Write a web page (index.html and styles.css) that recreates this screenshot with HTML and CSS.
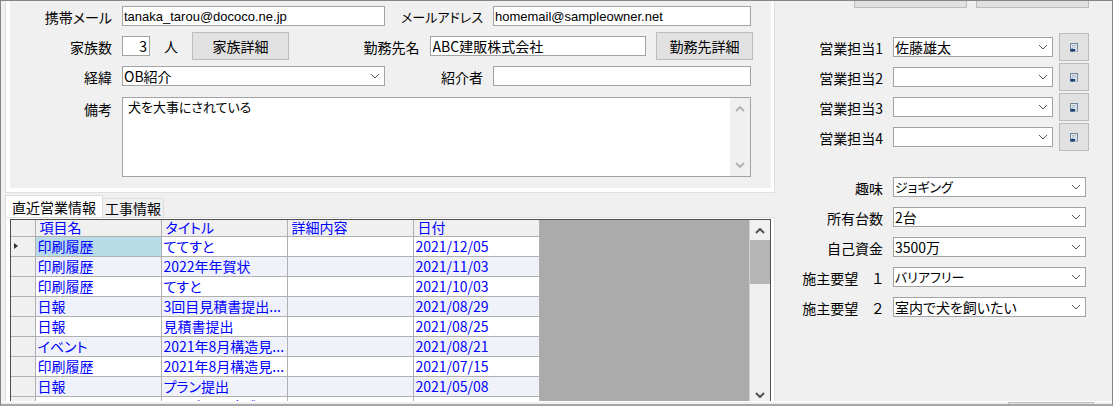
FILE: index.html
```html
<!DOCTYPE html>
<html lang="ja">
<head>
<meta charset="utf-8">
<title>顧客情報</title>
<link rel="stylesheet" href="styles.css">
</head>
<body>
<svg class="defs" aria-hidden="true">
  <symbol id="down" viewBox="0 0 10 6"><path d="M1 1 L5 5 L9 1" fill="none" stroke="currentColor"/></symbol>
  <symbol id="up" viewBox="0 0 10 6"><path d="M1 5 L5 1 L9 5" fill="none" stroke="currentColor"/></symbol>
  <symbol id="assign" viewBox="0 0 10 11">
    <rect x="1.5" y="1.5" width="7" height="8" fill="#dfe6ee" stroke="#6f859c"/>
    <path d="M3 3.5h4M3 5h4" stroke="#b4bec9"/>
    <path d="M6 7h2.5v3H6z" fill="#c3cad2"/>
    <path d="M1 8 L3.5 6 V7 H6 V9 H3.5 V10z" fill="#173f73"/>
  </symbol>
</svg>
<div class="window">
  <main class="workspace">
    <div class="left">
      <form class="panel">
        <div class="row halves">
          <div class="field"><label class="label" for="mobile">携帯メール</label><input class="box latin" id="mobile" type="text" value="tanaka_tarou@dococo.ne.jp"></div>
          <div class="field"><label class="label second kana" for="mail">メールアドレス</label><input class="box latin" id="mail" type="text" value="homemail@sampleowner.net"></div>
        </div>
        <div class="row family">
          <div class="field"><label class="label" for="family">家族数</label><input class="box count" id="family" type="text" value="3"><span class="unit">人</span><button class="button" type="button">家族詳細</button></div>
          <div class="field work"><label for="work">勤務先名</label><input class="box" id="work" type="text" value="ABC建販株式会社"><button class="button" type="button">勤務先詳細</button></div>
        </div>
        <div class="row halves">
          <div class="field"><label class="label" for="route">経緯</label><span class="combo"><select class="box" id="route"><option>OB紹介</option></select><svg class="arrow"><use href="#down"/></svg></span></div>
          <div class="field"><label class="label second" for="referrer">紹介者</label><input class="box" id="referrer" type="text"></div>
        </div>
        <div class="field notes"><label class="label" for="notes">備考</label><span class="memo"><textarea class="box kana" id="notes">犬を大事にされている</textarea><span class="memo-bar"><svg><use href="#up"/></svg><svg><use href="#down"/></svg></span></span></div>
      </form>
      <section class="tabs">
        <div class="tablist" role="tablist"><button class="tab active" type="button" role="tab" aria-selected="true">直近営業情報</button><button class="tab" type="button" role="tab" aria-selected="false">工事情報</button></div>
        <div class="tabpanel" role="tabpanel">
          <div class="list">
            <div class="list-body">
              <table class="table">
                <thead><tr><th class="mark"></th><th>項目名</th><th>タイトル</th><th>詳細内容</th><th>日付</th></tr></thead>
                <tbody>
                  <tr><td class="mark"><svg class="current" viewBox="0 0 4 6"><path d="M0 0 L4 3 L0 6z"/></svg></td><td class="selected">印刷履歴</td><td>ててすと</td><td></td><td>2021/12/05</td></tr>
                  <tr><td class="mark"></td><td>印刷履歴</td><td>2022年年賀状</td><td></td><td>2021/11/03</td></tr>
                  <tr><td class="mark"></td><td>印刷履歴</td><td>てすと</td><td></td><td>2021/10/03</td></tr>
                  <tr><td class="mark"></td><td>日報</td><td>3回目見積書提出...</td><td></td><td>2021/08/29</td></tr>
                  <tr><td class="mark"></td><td>日報</td><td>見積書提出</td><td></td><td>2021/08/25</td></tr>
                  <tr><td class="mark"></td><td>イベント</td><td>2021年8月構造見...</td><td></td><td>2021/08/21</td></tr>
                  <tr><td class="mark"></td><td>印刷履歴</td><td>2021年8月構造見...</td><td></td><td>2021/07/15</td></tr>
                  <tr><td class="mark"></td><td>日報</td><td>プラン提出</td><td></td><td>2021/05/08</td></tr>
                  <tr><td class="mark"></td><td>イベント</td><td>2021年4月完成見...</td><td></td><td>2021/04/25</td></tr>
                </tbody>
              </table>
            </div>
            <div class="scrollbar"><svg><use href="#up"/></svg><span class="thumb"></span><svg><use href="#down"/></svg></div>
          </div>
        </div>
      </section>
    </div>
    <form class="right">
      <div class="top-buttons"><span class="stub"></span><span class="stub"></span></div>
      <div class="group staff">
        <div class="field"><label class="label" for="s1">営業担当1</label><span class="combo"><select class="box" id="s1"><option>佐藤雄太</option></select><svg class="arrow"><use href="#down"/></svg></span><button class="button icon" type="button" aria-label="担当1を選択"><svg><use href="#assign"/></svg></button></div>
        <div class="field"><label class="label" for="s2">営業担当2</label><span class="combo"><select class="box" id="s2"><option></option></select><svg class="arrow"><use href="#down"/></svg></span><button class="button icon" type="button" aria-label="担当2を選択"><svg><use href="#assign"/></svg></button></div>
        <div class="field"><label class="label" for="s3">営業担当3</label><span class="combo"><select class="box" id="s3"><option></option></select><svg class="arrow"><use href="#down"/></svg></span><button class="button icon" type="button" aria-label="担当3を選択"><svg><use href="#assign"/></svg></button></div>
        <div class="field"><label class="label" for="s4">営業担当4</label><span class="combo"><select class="box" id="s4"><option></option></select><svg class="arrow"><use href="#down"/></svg></span><button class="button icon" type="button" aria-label="担当4を選択"><svg><use href="#assign"/></svg></button></div>
      </div>
      <div class="group">
        <div class="field"><label class="label" for="hobby">趣味</label><span class="combo"><select class="box kana" id="hobby"><option>ジョギング</option></select><svg class="arrow"><use href="#down"/></svg></span></div>
        <div class="field"><label class="label" for="cars">所有台数</label><span class="combo"><select class="box" id="cars"><option>2台</option></select><svg class="arrow"><use href="#down"/></svg></span></div>
        <div class="field"><label class="label" for="funds">自己資金</label><span class="combo"><select class="box" id="funds"><option>3500万</option></select><svg class="arrow"><use href="#down"/></svg></span></div>
        <div class="field"><label class="label" for="w1">施主要望　１</label><span class="combo"><select class="box kana" id="w1"><option>バリアフリー</option></select><svg class="arrow"><use href="#down"/></svg></span></div>
        <div class="field"><label class="label" for="w2">施主要望　２</label><span class="combo"><select class="box" id="w2"><option>室内で犬を飼いたい</option></select><svg class="arrow"><use href="#down"/></svg></span></div>
      </div>
    </form>
  </main>
  <footer class="footer"><span class="stub"></span></footer>
</div>
</body>
</html>
```
FILE: styles.css
```css
* { box-sizing: border-box; }
body { margin: 0; }
body, input, select, textarea, button {
  font-family: "Noto Sans CJK JP", sans-serif;
  font-size: 14px;
  font-feature-settings: "palt";
  color: #000;
}
.kana { font-size: 13px; }
.latin { font-family: "Liberation Sans", sans-serif; font-size: 13px; }
.defs { position: absolute; width: 0; height: 0; }
.window {
  display: flex;
  flex-direction: column;
  height: 100vh;
  overflow: hidden;
  border: 1px solid #858585;
  border-bottom-width: 2px;
  border-bottom-color: #a6a6a6;
  background: #f0f0f0;
}
.workspace { flex: 1; display: flex; min-height: 0; overflow: hidden; }
.left {
  flex: 1;
  display: flex;
  flex-direction: column;
  min-width: 0;
  min-height: 0;
  padding-left: 4px;
}
.panel {
  padding: 0 23px 15px 0;
  border: 1px solid #e0e0e0;
  border-top: 0;
  box-shadow: inset 4px 0 #fff, inset -3px 0 #fff, inset 0 -4px #fff;
}
.row { display: grid; height: 30px; align-items: center; }
.halves { grid-template-columns: 380fr 367fr; }
.family { grid-template-columns: 358fr 390fr; margin-right: -2px; }
.field { display: flex; align-items: center; gap: 10px; min-width: 0; }
.label { flex: none; width: 106px; text-align: right; white-space: nowrap; line-height: 20px; padding-top: 2px; }
.label.second { width: 98px; }
.work label { white-space: nowrap; padding-top: 2px; }
.box {
  flex: 1;
  min-width: 0;
  width: 100%;
  height: 20px;
  margin: 0;
  padding: 0 2px;
  border: 1px solid #a3a3a3;
  border-radius: 0;
  background: #fff;
  line-height: 18px;
  appearance: none;
  outline: none;
}
select.box { padding: 0 1px 1px; }
.box.latin { padding: 0 1px; }
.box.count { flex: none; width: 28px; text-align: right; }
.unit { width: 22px; padding-left: 4px; }
.button {
  flex: none;
  height: 28px;
  width: 97px;
  padding: 0;
  border: 1px solid #bcbcbc;
  background: #e1e1e1;
}
.combo { position: relative; flex: 1; display: flex; min-width: 0; }
.arrow {
  position: absolute;
  right: 5px;
  top: 7px;
  width: 10px;
  height: 6px;
  color: #555;
  pointer-events: none;
}
.notes { align-items: flex-start; padding-top: 6px; }
.memo { position: relative; flex: 1; display: flex; }
.memo .box { height: 80px; padding: 0 24px 0 5px; resize: none; overflow: hidden; }
.memo-bar {
  position: absolute;
  top: 1px;
  right: 1px;
  bottom: 1px;
  width: 20px;
  display: flex;
  flex-direction: column;
  justify-content: space-between;
  align-items: center;
  padding: 8px 0;
  background: #f0f0f0;
  color: #b4b4b4;
}
.memo-bar svg, .scrollbar svg { width: 10px; height: 6px; stroke-width: 2; }
.tabs { flex: 1; display: flex; flex-direction: column; min-height: 0; padding-top: 2px; }
.tablist { display: flex; align-items: flex-end; }
.tab {
  height: 19px;
  width: 61px;
  padding: 0;
  border: 1px solid #dcdcdc;
  border-width: 1px 1px 0 0;
  background: #f0f0f0;
  white-space: nowrap;
  line-height: 18px;
}
.tab.active { width: 98px; height: 22px; border-left-width: 1px; background: #fff; line-height: 20px; }
.tabpanel {
  flex: 1;
  display: flex;
  min-height: 0;
  padding: 1px 3px 0 4px;
  border: 1px solid #e0e0e0;
  border-bottom: 0;
  background: #fff;
}
.list { flex: 1; display: flex; min-width: 0; border: 1px solid #505050; border-bottom: 0; }
.list-body { flex: 1; min-width: 0; background: #ababab; }
.table { border-collapse: collapse; table-layout: fixed; width: 528px; color: #00f; }
.table th, .table td {
  width: 126px;
  height: 20px;
  padding: 0 2px;
  border: 1px solid #b0b0b0;
  border-width: 0 1px 1px 0;
  background: #fff;
  line-height: 18px;
  text-align: left;
  font-weight: 400;
  white-space: nowrap;
}
.table th { height: 16px; padding: 0 4px; line-height: 15px; }
.table .mark { width: 24px; }
.table th, .table td.mark, .table tbody tr:nth-child(even) td.mark { background: #f0f0f0; }
.table tbody tr:nth-child(even) td { background: #eff3f9; }
.table td.selected { background: #b9dce8; }
.current { display: block; width: 4px; height: 6px; margin-left: 1px; fill: #333; }
.scrollbar {
  width: 21px;
  display: flex;
  flex-direction: column;
  align-items: center;
  padding: 8px 0 3px;
  border-left: 1px solid #d0d0d0;
  background: #f0f0f0;
  color: #505050;
}
.thumb { width: 100%; height: 44px; margin: 6px 0 auto; background: #b6b6b6; }
.right { width: 337px; flex: none; padding-right: 23px; }
.top-buttons { display: flex; justify-content: flex-end; gap: 9px; height: 7px; margin-bottom: 24px; }
.stub { width: 113px; background: #e1e1e1; border: 1px solid #bcbcbc; border-top: 0; }
.group .field { height: 30px; }
.group .label { width: 108px; }
.group { margin-bottom: 20px; padding-right: 3px; }
.staff { padding-right: 0; }
.staff .field { gap: 6px; }
.staff .label { margin-right: 4px; }
.button.icon { width: 30px; display: grid; place-items: center; }
.icon svg { width: 10px; height: 11px; }
.footer { height: 3px; flex: none; display: flex; justify-content: flex-end; padding-right: 18px; border-top: 1px solid #fff; }
.footer .stub { width: 86px; border-top: 1px solid #bcbcbc; border-bottom: 0; }
```
